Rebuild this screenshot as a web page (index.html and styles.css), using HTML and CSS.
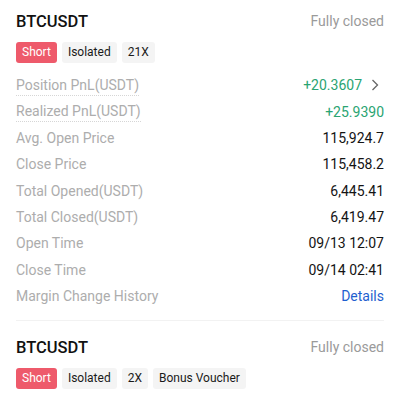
FILE: index.html
```html
<!DOCTYPE html>
<html>
<head>
<meta charset="utf-8">
<link rel="stylesheet" href="styles.css">
</head>
<body>
<div class="list">
  <section class="card">
    <div class="head">
      <span class="symbol">BTCUSDT</span>
      <span class="status">Fully closed</span>
    </div>
    <div class="tags">
      <span class="tag short">Short</span>
      <span class="tag">Isolated</span>
      <span class="tag">21X</span>
    </div>
    <div class="rows">
      <div class="row"><span class="label dotted">Position PnL(USDT)</span><span class="value green">+20.3607<svg class="chev" viewBox="0 0 8 12" width="8" height="12"><path d="M1.5 1 L6.5 6 L1.5 11" fill="none" stroke="#666" stroke-width="1.3"/></svg></span></div>
      <div class="row"><span class="label dotted">Realized PnL(USDT)</span><span class="value green">+25.9390</span></div>
      <div class="row"><span class="label">Avg. Open Price</span><span class="value">115,924.7</span></div>
      <div class="row"><span class="label">Close Price</span><span class="value">115,458.2</span></div>
      <div class="row"><span class="label">Total Opened(USDT)</span><span class="value">6,445.41</span></div>
      <div class="row"><span class="label">Total Closed(USDT)</span><span class="value">6,419.47</span></div>
      <div class="row"><span class="label">Open Time</span><span class="value">09/13 12:07</span></div>
      <div class="row"><span class="label">Close Time</span><span class="value">09/14 02:41</span></div>
      <div class="row"><span class="label">Margin Change History</span><span class="value link">Details</span></div>
    </div>
  </section>
  <section class="card">
    <div class="head">
      <span class="symbol">BTCUSDT</span>
      <span class="status">Fully closed</span>
    </div>
    <div class="tags">
      <span class="tag short">Short</span>
      <span class="tag">Isolated</span>
      <span class="tag">2X</span>
      <span class="tag">Bonus Voucher</span>
    </div>
  </section>
</div>
</body>
</html>
```
FILE: styles.css
```css
html, body {
  margin: 0;
  padding: 0;
  background: #fff;
}
body {
  font-family: Roboto, "Noto Sans", sans-serif;
  color: #121212;
  overflow: hidden;
}
.list {
  padding: 0 16px;
}
.card {
  padding: 15px 0 11px;
  border-bottom: 1px solid #f2f2f2;
}
.card:first-child {
  padding-top: 10px;
}
.head {
  display: flex;
  justify-content: space-between;
  align-items: center;
  height: 22px;
}
.symbol {
  font-size: 16.5px;
  font-weight: 500;
  color: #111;
}
.status {
  font-size: 14px;
  color: #9a9a9a;
}
.tags {
  display: flex;
  gap: 5px;
  margin-top: 10px;
}
.tag {
  height: 21px;
  line-height: 21px;
  padding: 0 6px;
  border-radius: 3px;
  background: #f4f4f4;
  font-size: 12px;
  color: #1a1a1a;
}
.tag.short {
  background: #ee5a6b;
  color: #fff;
}
.rows {
  margin-top: 9px;
}
.row {
  display: flex;
  justify-content: space-between;
  align-items: center;
  height: 26.375px;
}
.label {
  font-size: 14px;
  color: #adadad;
  line-height: 20px;
}
.label.dotted {
  border-bottom: 1px dotted #d6d6d6;
}
.value {
  font-size: 14px;
  color: #141414;
  display: flex;
  align-items: center;
}
.value.green {
  color: #2aa472;
}
.value.link {
  color: #1f5fcf;
}
.chev {
  margin-left: 9px;
  margin-right: 5px;
}
```
